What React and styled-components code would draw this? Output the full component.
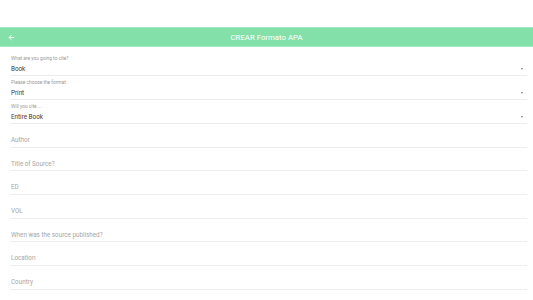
import React from "react";
import styled, { createGlobalStyle } from "styled-components";

const Global = createGlobalStyle`
  html, body { margin: 0; padding: 0; background: #ffffff; }
  body { font-family: Roboto, "Liberation Sans", sans-serif; }
  * { box-sizing: border-box; }
`;

const Page = styled.div`
  width: 533px;
  height: 300px;
  overflow: hidden;
  background: #fff;
  padding-top: 27px;
  display: flex;
  flex-direction: column;
`;

const Header = styled.header`
  height: 20px;
  background: #84e0a9;
  border-top: 1px solid #a4e8c0;
  border-bottom: 1px solid #a4e8c0;
  display: flex;
  align-items: center;
  position: relative;
  padding-left: 7px;
`;

const BackButton = styled.button`
  border: 0;
  background: transparent;
  padding: 0;
  width: 8px;
  height: 8px;
  display: flex;
  align-items: center;
  justify-content: center;
  cursor: pointer;
`;

const Title = styled.h1`
  position: absolute;
  left: 0;
  right: 0;
  text-align: center;
  margin: 0;
  font-size: 7.8px;
  font-weight: 400;
  color: #ffffff;
  pointer-events: none;
`;

const Form = styled.form`
  display: flex;
  flex-direction: column;
  padding: 5px 6px 0 10px;
`;

const SelectField = styled.div`
  height: 24px;
  padding: 4px 0 0 1px;
  border-bottom: 1px solid #ececec;
  display: flex;
  flex-direction: column;
`;

const SelectLabel = styled.label`
  font-size: 4.8px;
  line-height: 6px;
  height: 6px;
  color: #999;
`;

const SelectValueRow = styled.div`
  margin-top: 3px;
  height: 8px;
  display: flex;
  align-items: center;
  justify-content: space-between;
  padding-right: 4px;
`;

const SelectValue = styled.span`
  font-size: 6.3px;
  line-height: 8px;
  color: #3a3a3a;
`;

const Arrow = styled.span`
  width: 0;
  height: 0;
  border-left: 1.6px solid transparent;
  border-right: 1.6px solid transparent;
  border-top: 2px solid #808080;
`;

const TextInput = styled.input`
  margin-top: 10.67px;
  height: 13px;
  border: 0;
  border-bottom: 1px solid #ededed;
  padding: 0 0 1px 1px;
  font-family: inherit;
  font-size: 6.3px;
  color: #333;
  background: transparent;
  outline: none;
  &::placeholder { color: #a6a6a6; }
`;

const selects = [
  { label: "What are you going to cite?", value: "Book" },
  { label: "Please choose the format", value: "Print" },
  { label: "Will you cite ...", value: "Entire Book" },
];

const inputs = [
  "Author",
  "Title of Source?",
  "ED",
  "VOL",
  "When was the source published?",
  "Location",
  "Country",
];

export default function App() {
  return (
    <>
      <Global />
      <Page>
        <Header>
          <BackButton type="button" aria-label="back">
            <svg width="7" height="7" viewBox="0 0 24 24" fill="none" stroke="#ffffff" strokeWidth="3" strokeLinecap="round" strokeLinejoin="round">
              <path d="M20 12H4" />
              <path d="M11 5l-7 7 7 7" />
            </svg>
          </BackButton>
          <Title>CREAR Formato APA</Title>
        </Header>
        <Form>
          {selects.map((s) => (
            <SelectField key={s.label}>
              <SelectLabel>{s.label}</SelectLabel>
              <SelectValueRow>
                <SelectValue>{s.value}</SelectValue>
                <Arrow />
              </SelectValueRow>
            </SelectField>
          ))}
          {inputs.map((p) => (
            <TextInput key={p} placeholder={p} />
          ))}
        </Form>
      </Page>
    </>
  );
}
